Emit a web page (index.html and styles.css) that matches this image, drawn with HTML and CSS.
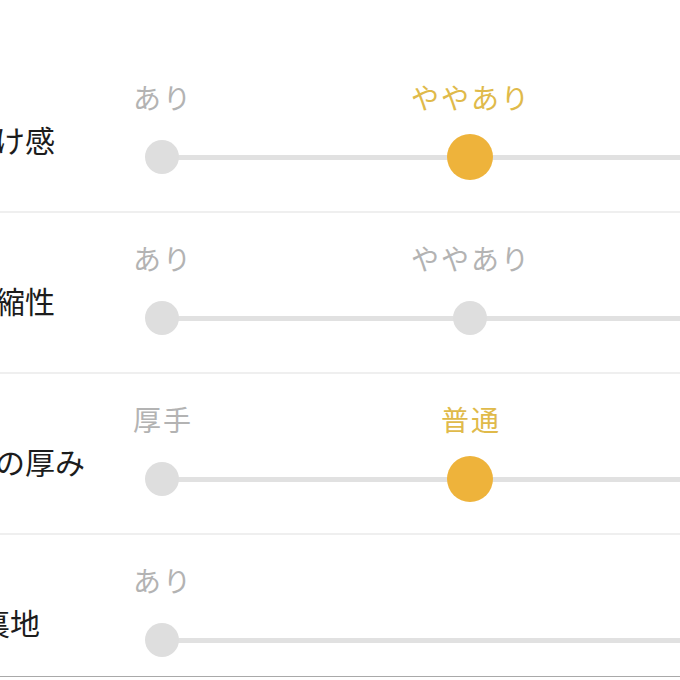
FILE: index.html
```html
<!DOCTYPE html>
<html lang="ja">

<head>
  <meta charset="UTF-8">
  <meta name="viewport" content="width=device-width, initial-scale=1.0">
  <link rel="stylesheet" href="styles.css">
  <title>素材感</title>
</head>

<body>
  <div class="main">
    <ul class="spec-list">
      <li class="spec">
        <div class="spec-title">透け感</div>
        <div class="slider">
          <div class="option"><span class="option-label">あり</span><span class="knob"><i class="dot"></i></span></div>
          <div class="option active"><span class="option-label">ややあり</span><span class="knob"><i class="dot"></i></span></div>
          <div class="option"><span class="option-label">なし</span><span class="knob"><i class="dot"></i></span></div>
        </div>
      </li>
      <li class="spec">
        <div class="spec-title">伸縮性</div>
        <div class="slider">
          <div class="option"><span class="option-label">あり</span><span class="knob"><i class="dot"></i></span></div>
          <div class="option"><span class="option-label">ややあり</span><span class="knob"><i class="dot"></i></span></div>
          <div class="option"><span class="option-label">なし</span><span class="knob"><i class="dot"></i></span></div>
        </div>
      </li>
      <li class="spec">
        <div class="spec-title">生地の厚み</div>
        <div class="slider">
          <div class="option"><span class="option-label">厚手</span><span class="knob"><i class="dot"></i></span></div>
          <div class="option active"><span class="option-label">普通</span><span class="knob"><i class="dot"></i></span></div>
          <div class="option"><span class="option-label">薄手</span><span class="knob"><i class="dot"></i></span></div>
        </div>
      </li>
      <li class="spec">
        <div class="spec-title">裏地</div>
        <div class="slider">
          <div class="option"><span class="option-label">あり</span><span class="knob"><i class="dot"></i></span></div>
          <div class="option"><span class="option-label">&nbsp;</span><span class="knob"></span></div>
          <div class="option"><span class="option-label">なし</span><span class="knob"><i class="dot"></i></span></div>
        </div>
      </li>
    </ul>
  </div>
</body>

</html>
```

FILE: styles.css
```css
* {
  margin: 0;
  padding: 0;
  box-sizing: border-box;
}

html,
body {
  background: #fff;
  overflow: hidden;
}

body {
  font-family: "Noto Sans CJK JP", "Noto Sans", sans-serif;
  color: #1c1c1c;
}

.main {
  padding-top: 52px;
}

.spec-list {
  list-style: none;
  width: 900px;
  margin-left: -80px;
}

.spec {
  display: flex;
  flex-direction: row;
  align-items: flex-start;
  padding: 30px 0 31px;
  border-bottom: 2px solid #efefef;
}

.spec:last-child {
  padding-bottom: 13px;
  border-bottom: 1px solid #a9a9a9;
}

.spec-title {
  width: 180px;
  margin-top: 39px;
  font-size: 30px;
  line-height: 36px;
  text-align: center;
  white-space: nowrap;
}

.slider {
  position: relative;
  width: 696px;
  margin-left: 22px;
  display: flex;
  flex-direction: row;
  justify-content: space-between;
}

/* track behind the knobs */
.slider::before {
  content: "";
  position: absolute;
  left: 40px;
  right: 40px;
  top: 73px;
  height: 5px;
  background: #e1e1e1;
}

.option {
  position: relative;
  width: 80px;
  display: flex;
  flex-direction: column;
  align-items: center;
}

.option-label {
  font-size: 28px;
  line-height: 30px;
  color: #b3b3b3;
  white-space: nowrap;
  letter-spacing: 2px;
  padding-left: 2px;
}

.knob {
  margin-top: 22px;
  height: 46px;
  display: flex;
  align-items: center;
  justify-content: center;
}

.dot {
  display: block;
  width: 34px;
  height: 34px;
  border-radius: 50%;
  background: #dedede;
}

.option.active .option-label {
  color: #e0ba4a;
}

.option.active .dot {
  width: 46px;
  height: 46px;
  background: #eeb33b;
}
```
